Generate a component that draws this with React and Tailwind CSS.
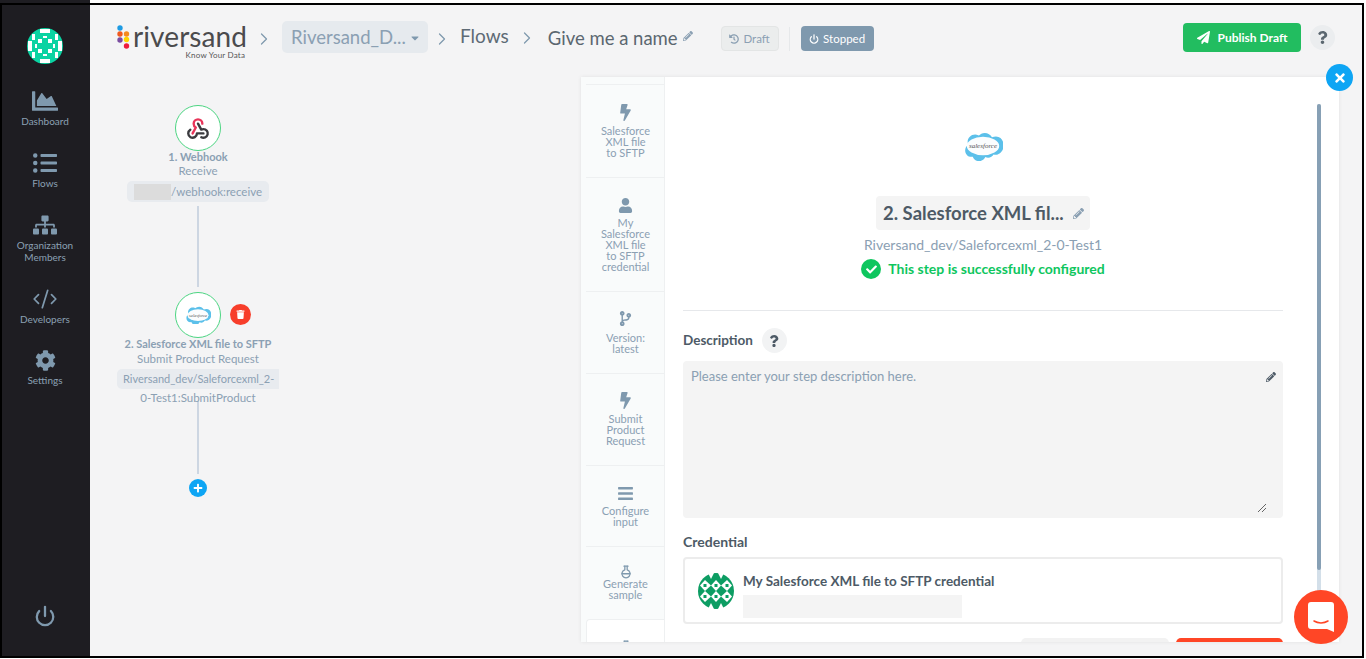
import {
  FaBars,
  FaBolt,
  FaChartArea,
  FaCheck,
  FaCodeBranch,
  FaCaretDown,
  FaCog,
  FaHistory,
  FaListUl,
  FaPaperPlane,
  FaPencilAlt,
  FaPlus,
  FaQuestion,
  FaSitemap,
  FaTimes,
  FaTrash,
  FaUser,
} from "react-icons/fa";
import { ChevronRight, CodeXml, FlaskRound, Power } from "lucide-react";

const sideItems = [
  { label: ["Dashboard"], icon: <FaChartArea size={26} />, h: "h-[62px]" },
  { label: ["Flows"], icon: <FaListUl size={24} />, h: "h-[62px]" },
  { label: ["Organization", "Members"], icon: <FaSitemap size={24} />, h: "h-[74px]" },
  { label: ["Developers"], icon: <CodeXml size={26} strokeWidth={1.6} />, h: "h-[61px]" },
  { label: ["Settings"], icon: <FaCog size={21} />, h: "h-[61px]" },
];

const stepTabs = [
  { label: ["Salesforce", "XML file", "to SFTP"], icon: <FaBolt size={17} />, h: "h-[93px]", pt: "pt-[19px]", gap: "mt-[4px]" },
  { label: ["My", "Salesforce", "XML file", "to SFTP", "credential"], icon: <FaUser size={15} />, h: "h-[114px]", pt: "pt-[20px]", gap: "mt-[4px]" },
  { label: ["Version:", "latest"], icon: <FaCodeBranch size={15} />, h: "h-[82px]", pt: "pt-[19px]", gap: "mt-[6px]" },
  { label: ["Submit", "Product", "Request"], icon: <FaBolt size={17} />, h: "h-[92px]", pt: "pt-[18px]", gap: "mt-[4px]" },
  { label: ["Configure", "input"], icon: <FaBars size={17} />, h: "h-[81px]", pt: "pt-[19px]", gap: "mt-[3px]" },
  { label: ["Generate", "sample"], icon: <FlaskRound size={14} strokeWidth={2.2} />, h: "h-[73px]", pt: "pt-[18px]", gap: "-mt-[1px]" },
];

const SalesforceLogo = ({ w }) => (
  <svg width={w} viewBox="2 1 37 27">
    <path
      d="M16.5 4.5c1.4-1.6 3.4-2.6 5.6-2.6 2.9 0 5.4 1.6 6.7 4 1.2-.5 2.4-.8 3.7-.8 4.700 0 7 3.800 7 8.500s-3.400 8.400-7.600 8.400c-.5 0-1.100 0-1.600-.2-1 1.800-2.900 3-5.100 3-.9 0-1.800-.2-2.500-.6-1 2.200-3.200 3.800-5.800 3.800-2.700 0-5-1.700-5.900-4.100-.4.1-.8.1-1.200.1-3.300 0-5.800-2.700-5.800-6 0-2.200 1.200-4.200 2.900-5.200-.4-.8-.6-1.800-.6-2.800 0-3.800 3.100-6.800 6.900-6.800 2.100 0 3.900 .9 5.300 2.300z"
      fill="#5cc0ea"
    />
    <ellipse cx="20.500" cy="14" rx="15" ry="8.500" fill="#fbfdfe" />
    <text x="20.500" y="16" textAnchor="middle" fontSize="6.500" fill="#555" fontFamily="Liberation Serif, serif" fontStyle="italic">
      salesforce
    </text>
  </svg>
);

const TealAvatar = () => (
  <svg width="36" height="36" viewBox="0 0 36 36">
    <circle cx="18" cy="18" r="18" fill="#0ad3a2" />
    <g fill="#ffffff">
      <rect x="13" y="1" width="10" height="4" />
      <rect x="13" y="31" width="10" height="4" />
      <rect x="1" y="13" width="4" height="10" />
      <rect x="31" y="13" width="4" height="10" />
      <rect x="11" y="11" width="4" height="4" />
      <rect x="21" y="11" width="4" height="4" />
      <rect x="11" y="21" width="4" height="4" />
      <rect x="21" y="21" width="4" height="4" />
      <rect x="5" y="6" width="3" height="6" />
      <rect x="28" y="6" width="3" height="6" />
      <rect x="5" y="24" width="3" height="6" />
      <rect x="28" y="24" width="3" height="6" />
      <rect x="16" y="8" width="4" height="2" />
      <rect x="16" y="26" width="4" height="2" />
      <rect x="8" y="16" width="2" height="4" />
      <rect x="26" y="16" width="2" height="4" />
    </g>
  </svg>
);

const GreenAvatar = () => (
  <svg width="36" height="36" viewBox="0 0 36 36">
    <circle cx="18" cy="18" r="18" fill="#0d9d63" />
    <g fill="#ffffff">
      <polygon points="18,7 23,12.500 18,18 13,12.500" />
      <polygon points="18,18 23,23.500 18,29 13,23.500" />
      <polygon points="7,7 13,12.500 7,18 2,12.500" />
      <polygon points="29,7 34,12.500 29,18 23,12.500" />
      <polygon points="7,18 13,23.500 7,29 2,23.500" />
      <polygon points="29,18 34,23.500 29,29 23,23.500" />
      <polygon points="10,0 16,0 13,6" />
      <polygon points="20,0 26,0 23,6" />
      <polygon points="10,36 16,36 13,30" />
      <polygon points="20,36 26,36 23,30" />
    </g>
    <g fill="#0d9d63">
      <rect x="16.500" y="11" width="3" height="3" />
      <rect x="16.500" y="22" width="3" height="3" />
      <rect x="5.500" y="11" width="3" height="3" />
      <rect x="27.500" y="11" width="3" height="3" />
      <rect x="5.500" y="22" width="3" height="3" />
      <rect x="27.500" y="22" width="3" height="3" />
    </g>
  </svg>
);

const RiversandLogo = () => (
  <div className="flex h-[36px] w-[134px] shrink-0 items-start">
    <svg width="16" height="24" viewBox="0 0 16 24" className="mt-px shrink-0">
      <circle cx="3" cy="3" r="2.700" fill="#1e9be3" />
      <circle cx="3" cy="9" r="2.700" fill="#f0591f" />
      <circle cx="9.500" cy="9" r="2.700" fill="#f58a1f" />
      <circle cx="3" cy="15" r="2.700" fill="#7a4da0" />
      <circle cx="9.500" cy="14.500" r="2.700" fill="#ffd400" />
      <circle cx="9.500" cy="21" r="2.700" fill="#ee1c3c" />
    </svg>
    <div className="flex flex-col items-end">
      <span className="h-[24px] text-[28px] leading-[24px] tracking-[0.1px] text-[#4b4b4d]">riversand</span>
      <span className="mt-[2px] pr-[2px] text-[8px] leading-[10px] tracking-[0.2px] whitespace-nowrap text-[#555]">
        Know Your Data
      </span>
    </div>
  </div>
);

const WebhookIcon = () => (
  <svg width="26" height="26" viewBox="0 0 24 24" fill="none" strokeWidth="2.200" strokeLinecap="round" strokeLinejoin="round">
    <path d="M4.876 13.61a4 4 0 1 0 6.124 3.39h6" stroke="#3b3b3f" />
    <path d="M15.066 20.502a4 4 0 1 0 1.934 -7.502c-.706 0 -1.424 .179 -2 .5l-3 -5.500" stroke="#3b3b3f" />
    <path d="M16 8a4 4 0 1 0 -8 0c0 1.506 .77 2.818 2 3.500l-3 5.500" stroke="#e8355a" />
  </svg>
);

const Sidebar = () => (
  <aside className="flex w-[88px] shrink-0 flex-col items-center bg-[#1e1d22] pr-[2px] text-[#7f99ae]">
    <div className="mt-[23px] mb-[22px]">
      <TealAvatar />
    </div>
    {sideItems.map((item) => (
      <div key={item.label[0]} className={`flex flex-col items-center ${item.h}`}>
        <div className="mt-[2px] flex h-[26px] items-center">{item.icon}</div>
        <div className="mt-[1px] text-center text-[10px] leading-[12px] text-[#8ba0b3]">
          {item.label.map((line) => (
            <div key={line}>{line}</div>
          ))}
        </div>
      </div>
    ))}
    <div className="mt-auto mb-[29px]">
      <Power size={22} strokeWidth={2.500} />
    </div>
  </aside>
);

const Header = () => (
  <header className="flex h-[72px] shrink-0 items-start pr-[27px] pl-[27px]">
    <div className="mt-[19px]">
      <RiversandLogo />
    </div>
    <ChevronRight size={20} strokeWidth={1.500} className="mt-[24px] ml-[3px] text-[#7f99ae]" />
    <div className="mt-[16px] ml-[8px] flex h-[32px] w-[146px] items-center justify-between rounded-[5px] bg-[#e6eaee] pt-[2px] pr-[7px] pl-[9px]">
      <span className="text-[18.500px] text-[#8ba0b3]">Riversand_D...</span>
      <FaCaretDown size={12} className="text-[#7f99ae]" />
    </div>
    <ChevronRight size={20} strokeWidth={1.500} className="mt-[24px] ml-[4px] text-[#7f99ae]" />
    <span className="mt-[18px] ml-[8px] text-[19px] leading-[26px] text-[#5e6b75]">Flows</span>
    <ChevronRight size={20} strokeWidth={1.500} className="mt-[23px] ml-[8px] text-[#7f99ae]" />
    <span className="mt-[20px] ml-[11px] text-[18.500px] leading-[26px] text-[#5b6770]">Give me a name</span>
    <FaPencilAlt size={10} className="mt-[26px] ml-[5px] text-[#8ba0b3]" />
    <div className="mt-[21px] ml-[28px] flex h-[25px] w-[58px] items-center justify-center gap-[4px] rounded-[4px] border border-[#e3e5e5] bg-[#ebeded] text-[11.500px] text-[#8ba0b3]">
      <FaHistory size={10} />
      Draft
    </div>
    <div className="mt-[22px] ml-[10px] h-[24px] w-px bg-[#e6e8ea]" />
    <div className="mt-[21px] ml-[11px] flex h-[25px] w-[73px] items-center justify-center gap-[4px] rounded-[4px] bg-[#7f99ae] text-[11.500px] text-white">
      <Power size={10} strokeWidth={3} />
      Stopped
    </div>
    <div className="mt-[18px] ml-auto flex h-[29px] w-[118px] items-center justify-center gap-[8px] rounded-[4px] bg-[#22bd60] text-[12px] font-bold text-white">
      <FaPaperPlane size={13} />
      Publish Draft
    </div>
    <div className="mt-[20px] ml-[9px] flex h-[25px] w-[25px] items-center justify-center rounded-full bg-[#ebedef] text-[#5b6770]">
      <FaQuestion size={13} />
    </div>
  </header>
);

const FlowCanvas = () => (
  <div className="flex w-[216px] shrink-0 flex-col items-center pt-[28px] text-center text-[11.500px] text-[#8ba0b3]">
    <div className="flex h-[46px] w-[46px] items-center justify-center rounded-full border border-[#4cd582] bg-white">
      <WebhookIcon />
    </div>
    <div className="mt-[-1px] h-[14px] text-[11px] leading-[14px] font-bold">1. Webhook</div>
    <div className="h-[15px] leading-[14px]">Receive</div>
    <div className="mt-[2px] flex h-[21px] w-[142px] items-center justify-between rounded-[5px] bg-[#e8ebef] pr-[7px] pl-[7px] whitespace-nowrap">
      <span className="h-[16px] w-[40px] bg-[#dcdcdc]" />
      <span>/webhook:receive</span>
    </div>
    <div className="mt-[4px] h-[81px] w-[2px] bg-[#cdd6e2]" />
    <div className="relative mt-[5px] flex h-[46px] w-[46px] items-center justify-center rounded-full border border-[#4cd582] bg-white">
      <SalesforceLogo w={26} />
      <div className="absolute top-[11px] left-[54px] flex h-[21px] w-[21px] items-center justify-center rounded-full bg-[#f73e2b] text-white">
        <FaTrash size={9} />
      </div>
    </div>
    <div className="mt-[-1px] h-[15px] text-[11px] leading-[14px] font-bold whitespace-nowrap">2. Salesforce XML file to SFTP</div>
    <div className="h-[15px] leading-[14px]">Submit Product Request</div>
    <div className="mt-[2px] h-[20px] w-[162px] rounded-l-[5px] bg-[#e8ebef] pl-[6px] text-left text-[11px] leading-[20px] whitespace-nowrap">
      Riversand_dev/Saleforcexml_2-
    </div>
    <div className="relative z-10 h-[18px] leading-[18px]">0-Test1:SubmitProduct</div>
    <div className="mt-[-6px] h-[73px] w-[2px] bg-[#cdd6e2]" />
    <div className="mt-[5px] flex h-[18px] w-[18px] items-center justify-center rounded-full bg-[#0ea5f4] text-white">
      <FaPlus size={10} />
    </div>
  </div>
);

const StepNav = () => (
  <nav className="flex w-[84px] shrink-0 flex-col overflow-hidden border-r border-[#eef0f1] bg-[#f9fbfb] pt-[7px] pl-[5px]">
    {stepTabs.map((tab) => (
      <div
        key={tab.label.join(" ")}
        className={`flex shrink-0 flex-col items-center border-t border-[#eef0f1] pl-[1px] text-[#7f99ae] ${tab.h} ${tab.pt}`}
      >
        {tab.icon}
        <div className={`text-center text-[11px] leading-[11px] text-[#8ba0b3] ${tab.gap}`}>
          {tab.label.map((line) => (
            <div key={line}>{line}</div>
          ))}
        </div>
      </div>
    ))}
    <div className="flex h-[40px] shrink-0 justify-center rounded-tl-[4px] border-t border-l border-[#eef0f1] bg-white pt-[20px] text-[#7f99ae]">
      <FlaskRound size={14} strokeWidth={2.2} />
    </div>
  </nav>
);

const StepDetail = () => (
  <div className="relative flex flex-1 flex-col overflow-hidden bg-white pr-[56px] pl-[18px]">
    <div className="flex h-[234px] shrink-0 flex-col items-center border-b border-[#e6e8eb]">
      <div className="mt-[55px] h-[29px]">
        <SalesforceLogo w={40} />
      </div>
      <div className="mt-[35px] flex h-[34px] w-[214px] items-center justify-between rounded-[4px] bg-[#f4f4f4] pt-[1px] pr-[6px] pl-[7px]">
        <span className="text-[18.500px] font-bold whitespace-nowrap text-[#4d5a66]">2. Salesforce XML fil...</span>
        <FaPencilAlt size={11} className="text-[#8ba0b3]" />
      </div>
      <div className="mt-[7px] text-[14px] leading-[16px] text-[#8ba0b3]">Riversand_dev/Saleforcexml_2-0-Test1</div>
      <div className="mt-[6px] flex items-center gap-[7px]">
        <span className="flex h-[20px] w-[20px] items-center justify-center rounded-full bg-[#0ec65e] text-white">
          <FaCheck size={11} />
        </span>
        <span className="text-[14px] leading-[20px] font-bold text-[#0ec65e]">This step is successfully configured</span>
      </div>
    </div>

    <div className="mt-[17px] flex h-[25px] shrink-0 items-center gap-[9px]">
      <span className="text-[13.500px] font-bold text-[#4d5a66]">Description</span>
      <span className="flex h-[25px] w-[25px] items-center justify-center rounded-full bg-[#f2f3f4] text-[#4d5a66]">
        <FaQuestion size={12} />
      </span>
    </div>
    <div className="relative mt-[8px] h-[157px] shrink-0 rounded-[4px] bg-[#f4f4f4] px-[8px] pt-[6px] text-[13px] text-[#8ba0b3]">
      Please enter your step description here.
      <FaPencilAlt size={10} className="absolute top-[11px] right-[7px] text-[#4d5a66]" />
      <svg width="10" height="10" viewBox="0 0 10 10" className="absolute right-[16px] bottom-[5px]" stroke="#666" strokeWidth="1">
        <path d="M1 9 9 1M5 9 9 5" />
      </svg>
    </div>

    <div className="mt-[15px] h-[18px] shrink-0 text-[14px] leading-[18px] font-bold text-[#4d5a66]">Credential</div>
    <div className="mt-[6px] flex h-[67px] shrink-0 items-center rounded-[4px] border-2 border-[#ececec] pl-[13px]">
      <GreenAvatar />
      <div className="ml-[9px] self-start pt-[13px]">
        <div className="text-[13.500px] leading-[18px] font-bold text-[#4d5a66]">My Salesforce XML file to SFTP credential</div>
        <div className="mt-[5px] h-[23px] w-[219px] bg-[#f4f4f4]" />
      </div>
    </div>
    <div className="mt-[14px] flex shrink-0 justify-end gap-[7px]">
      <div className="h-[12px] w-[148px] rounded-t-[5px] bg-[#f2f2f2]" />
      <div className="h-[12px] w-[107px] rounded-t-[5px] bg-[#ff4626]" />
    </div>

    <div className="absolute top-[27px] right-[18px] h-[524px] w-[4px] rounded-full bg-[#d3dfe9]">
      <div className="h-[466px] w-[4px] rounded-full bg-[#87a0b5]" />
    </div>
  </div>
);

const App = () => {
  return (
    <div className="flex h-[659px] w-[1366px] flex-col overflow-hidden bg-white font-['Lato',sans-serif]">
      <div className="flex h-[3px] shrink-0">
        <div className="w-[90px] bg-[#1e1d22]" />
      </div>
      <div className="flex h-[655px] w-[1364px] shrink-0 border-2 border-black bg-[#f4f4f5]">
        <Sidebar />
        <main className="relative flex min-w-0 flex-1 flex-col">
          <Header />
          <div className="flex min-h-0 flex-1">
            <FlowCanvas />
            <section className="relative mb-[14px] ml-[275px] flex w-[758px] shadow-[0_0_4px_rgba(0,0,0,0.08)]">
              <StepNav />
              <StepDetail />
              <div className="absolute -top-[13px] -right-[14px] flex h-[27px] w-[27px] items-center justify-center rounded-full bg-[#0ea5f4] text-white">
                <FaTimes size={14} />
              </div>
            </section>
          </div>
          <div className="absolute right-[14px] bottom-[12px] flex h-[54px] w-[54px] items-center justify-center rounded-full bg-[#ff4626]">
            <svg width="26" height="30" viewBox="0 0 26 30">
              <path d="M3 0h20a3 3 0 0 1 3 3v27l-7-3H3a3 3 0 0 1-3-3V3a3 3 0 0 1 3-3z" fill="#fff" />
              <path d="M6 19c4 2.500 10 2.500 14 0" fill="none" stroke="#ff4626" strokeWidth="1.500" strokeLinecap="round" />
            </svg>
          </div>
        </main>
      </div>
    </div>
  );
};

export default App;
